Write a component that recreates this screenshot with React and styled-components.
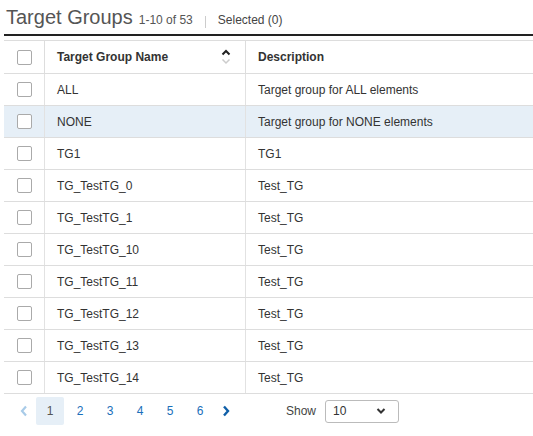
import React from "react";
import styled, { createGlobalStyle } from "styled-components";

const rows = [
  { name: "ALL", desc: "Target group for ALL elements" },
  { name: "NONE", desc: "Target group for NONE elements", selected: true },
  { name: "TG1", desc: "TG1" },
  { name: "TG_TestTG_0", desc: "Test_TG" },
  { name: "TG_TestTG_1", desc: "Test_TG" },
  { name: "TG_TestTG_10", desc: "Test_TG" },
  { name: "TG_TestTG_11", desc: "Test_TG" },
  { name: "TG_TestTG_12", desc: "Test_TG" },
  { name: "TG_TestTG_13", desc: "Test_TG" },
  { name: "TG_TestTG_14", desc: "Test_TG" },
];

const pages = [1, 2, 3, 4, 5, 6];

const App = () => {
  return (
    <Page>
      <GlobalStyle />
      <Header>
        <Title>Target Groups</Title>
        <Count>1-10 of 53</Count>
        <Divider />
        <Selected>Selected (0)</Selected>
      </Header>
      <Table>
        <thead>
          <tr>
            <CheckCell as="th">
              <Checkbox />
            </CheckCell>
            <HeadCell>
              <HeadInner>
                Target Group Name
                <SortIcon width="10" height="18" viewBox="0 0 10 18">
                  <path d="M1.5 6.5 L5 3 L8.5 6.5" stroke="#222" strokeWidth="2" fill="none" />
                  <path d="M1.5 11.5 L5 15 L8.5 11.5" stroke="#ccc" strokeWidth="1.5" fill="none" />
                </SortIcon>
              </HeadInner>
            </HeadCell>
            <HeadCell>Description</HeadCell>
          </tr>
        </thead>
        <tbody>
          {rows.map((r) => (
            <Row key={r.name} $selected={r.selected}>
              <CheckCell>
                <Checkbox />
              </CheckCell>
              <Cell>{r.name}</Cell>
              <Cell>{r.desc}</Cell>
            </Row>
          ))}
        </tbody>
      </Table>
      <Footer>
        <Pager>
          <Arrow $disabled>
            <svg width="8" height="12" viewBox="0 0 8 12">
              <path d="M6 1.5 L2 6 L6 10.5" stroke="#a8cbe8" strokeWidth="2.2" fill="none" />
            </svg>
          </Arrow>
          {pages.map((p) => (
            <PageButton key={p} $active={p === 1}>
              {p}
            </PageButton>
          ))}
          <Arrow>
            <svg width="8" height="12" viewBox="0 0 8 12">
              <path d="M2 1.5 L6 6 L2 10.5" stroke="#0f5fa8" strokeWidth="2.4" fill="none" />
            </svg>
          </Arrow>
        </Pager>
        <ShowLabel>Show</ShowLabel>
        <Select>
          <span>10</span>
          <svg width="10" height="8" viewBox="0 0 10 8">
            <path d="M1.5 2 L5 5.5 L8.5 2" stroke="#333" strokeWidth="2" fill="none" />
          </svg>
        </Select>
      </Footer>
    </Page>
  );
};

const GlobalStyle = createGlobalStyle`
  body {
    margin: 0;
    background: #fff;
    font-family: "Liberation Sans", Arial, sans-serif;
    overflow: hidden;
  }
`;

const Page = styled.div`
  padding-left: 4px;
  width: 529px;
  height: 436px;
`;

const Header = styled.div`
  display: flex;
  align-items: baseline;
  height: 36px;
  padding-left: 2px;
  border-bottom: 2px solid #222;
  box-sizing: border-box;
  padding-top: 6px;
`;

const Title = styled.span`
  font-size: 20px;
  color: #555;
  margin-right: 6px;
`;

const Count = styled.span`
  font-size: 12px;
  color: #555;
`;

const Divider = styled.span`
  width: 1px;
  height: 12px;
  background: #ccc;
  margin: 0 12px;
  align-self: center;
  position: relative;
  top: 2px;
`;

const Selected = styled.span`
  font-size: 12px;
  color: #444;
`;

const Table = styled.table`
  width: 100%;
  margin-top: 4px;
  border-collapse: collapse;
  table-layout: fixed;
  font-size: 12px;
  color: #333;

  th, td {
    border-top: 1px solid #ddd;
    border-bottom: 1px solid #ddd;
    padding: 0;
  }
  th:first-child, td:first-child {
    width: 40px;
  }
  th:nth-child(2), td:nth-child(2) {
    width: 176px;
  }
`;

const HeadCell = styled.th`
  height: 32px;
  text-align: left;
  font-weight: bold;
  padding: 0 12px !important;
  border-left: 1px solid #ddd;
`;

const HeadInner = styled.div`
  display: flex;
  align-items: center;
  justify-content: space-between;
`;

const SortIcon = styled.svg`
  margin-right: 2px;
`;

const Row = styled.tr`
  background: ${(p) => (p.$selected ? "#e6eff7" : "#fff")};
`;

const Cell = styled.td`
  height: 31px;
  padding: 0 12px !important;
  border-left: 1px solid #e2e2e2;
`;

const CheckCell = styled.td`
  height: 31px;
  text-align: center;
  vertical-align: middle;
`;

const Checkbox = styled.span`
  display: inline-block;
  width: 13px;
  height: 13px;
  border: 1px solid #aaa;
  border-radius: 2px;
  background: #fff;
  vertical-align: middle;
`;

const Footer = styled.div`
  display: flex;
  align-items: center;
  height: 34px;
`;

const Pager = styled.div`
  display: flex;
  align-items: center;
  gap: 2px;
  padding-left: 10px;
  width: 272px;
`;

const Arrow = styled.span`
  width: 20px;
  height: 28px;
  display: flex;
  align-items: center;
  justify-content: center;
`;

const PageButton = styled.span`
  width: 28px;
  height: 28px;
  display: flex;
  align-items: center;
  justify-content: center;
  font-size: 12px;
  border-radius: 2px;
  color: ${(p) => (p.$active ? "#555" : "#1a6fba")};
  background: ${(p) => (p.$active ? "#e6eff7" : "transparent")};
`;

const ShowLabel = styled.span`
  font-size: 12px;
  color: #444;
  margin-right: 9px;
`;

const Select = styled.div`
  width: 74px;
  height: 23px;
  box-sizing: border-box;
  border: 1px solid #bbb;
  border-radius: 3px;
  display: flex;
  align-items: center;
  justify-content: space-between;
  padding: 0 12px 0 7px;
  font-size: 12px;
  color: #333;
`;

export default App;
